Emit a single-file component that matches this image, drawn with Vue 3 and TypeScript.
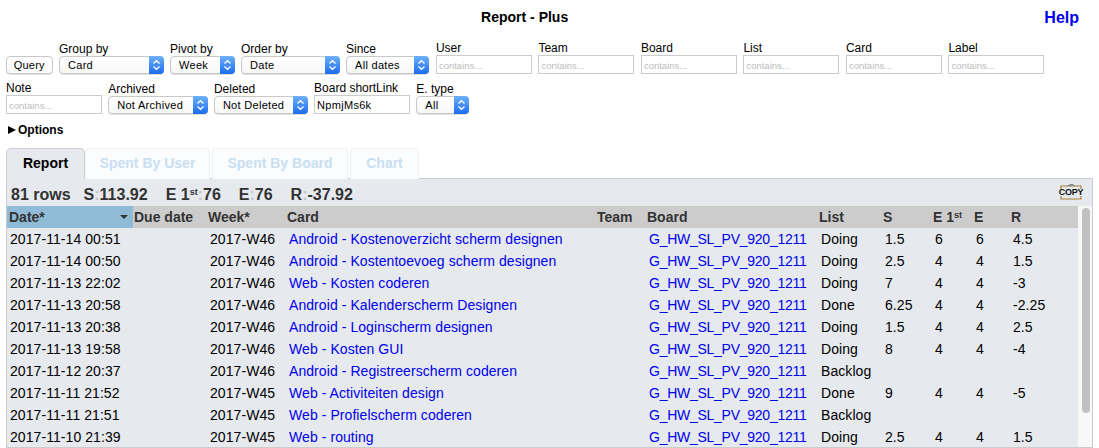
<script setup lang="ts">
interface Control {
  label: string
  kind: 'select' | 'input'
  width: number
  value?: string
}

const rowOne: Control[] = [
  { label: 'Group by', kind: 'select', width: 104.5, value: 'Card' },
  { label: 'Pivot by', kind: 'select', width: 64.5, value: 'Week' },
  { label: 'Order by', kind: 'select', width: 98.5, value: 'Date' },
  { label: 'Since', kind: 'select', width: 83.4, value: 'All dates' },
  { label: 'User', kind: 'input', width: 96 },
  { label: 'Team', kind: 'input', width: 96 },
  { label: 'Board', kind: 'input', width: 96 },
  { label: 'List', kind: 'input', width: 96 },
  { label: 'Card', kind: 'input', width: 96 },
  { label: 'Label', kind: 'input', width: 96 }
]

const rowTwo: Control[] = [
  { label: 'Note', kind: 'input', width: 96 },
  { label: 'Archived', kind: 'select', width: 99.5, value: 'Not Archived' },
  { label: 'Deleted', kind: 'select', width: 94, value: 'Not Deleted' },
  { label: 'Board shortLink', kind: 'input', width: 96, value: 'NpmjMs6k' },
  { label: 'E. type', kind: 'select', width: 53, value: 'All' }
]

const tabs = ['Report', 'Spent By User', 'Spent By Board', 'Chart']

const columns = [
  { name: 'Date*', width: 126 },
  { name: 'Due date', width: 73 },
  { name: 'Week*', width: 79 },
  { name: 'Card', width: 310 },
  { name: 'Team', width: 50 },
  { name: 'Board', width: 172 },
  { name: 'List', width: 64 },
  { name: 'S', width: 50 },
  { name: 'E 1', width: 41 },
  { name: 'E', width: 37 },
  { name: 'R', width: 69 }
]

const board = 'G_HW_SL_PV_920_1211'
const rows = [
  ['2017-11-14 00:51', '2017-W46', 'Android - Kostenoverzicht scherm designen', 'Doing', '1.5', '6', '6', '4.5'],
  ['2017-11-14 00:50', '2017-W46', 'Android - Kostentoevoeg scherm designen', 'Doing', '2.5', '4', '4', '1.5'],
  ['2017-11-13 22:02', '2017-W46', 'Web - Kosten coderen', 'Doing', '7', '4', '4', '-3'],
  ['2017-11-13 20:58', '2017-W46', 'Android - Kalenderscherm Designen', 'Done', '6.25', '4', '4', '-2.25'],
  ['2017-11-13 20:38', '2017-W46', 'Android - Loginscherm designen', 'Doing', '1.5', '4', '4', '2.5'],
  ['2017-11-13 19:58', '2017-W46', 'Web - Kosten GUI', 'Doing', '8', '4', '4', '-4'],
  ['2017-11-12 20:37', '2017-W46', 'Android - Registreerscherm coderen', 'Backlog', '', '', '', ''],
  ['2017-11-11 21:52', '2017-W45', 'Web - Activiteiten design', 'Done', '9', '4', '4', '-5'],
  ['2017-11-11 21:51', '2017-W45', 'Web - Profielscherm coderen', 'Backlog', '', '', '', ''],
  ['2017-11-10 21:39', '2017-W45', 'Web - routing', 'Doing', '2.5', '4', '4', '1.5']
]
</script>

<template>
  <div class="page">
    <header class="top">
      <div class="title">Report - Plus</div>
      <a class="help" href="#">Help</a>
    </header>

    <div class="filters">
      <button type="button" class="query">Query</button>
      <div v-for="c in rowOne" :key="c.label" class="field" :style="{ width: c.width + 'px' }">
        <label>{{ c.label }}</label>
        <input v-if="c.kind === 'input'" :value="c.value" placeholder="contains..." />
        <div v-else class="select">
          <span>{{ c.value }}</span>
          <i class="arrows">
            <svg width="9" height="12" viewBox="0 0 9 12" fill="none" stroke="#fff" stroke-width="1.3">
              <path d="M1.5 4.5 4.5 1.7l3 2.8M1.5 7.5l3 2.8 3-2.8" />
            </svg>
          </i>
        </div>
      </div>
    </div>

    <div class="filters second">
      <div v-for="c in rowTwo" :key="c.label" class="field" :style="{ width: c.width + 'px' }">
        <label>{{ c.label }}</label>
        <input v-if="c.kind === 'input'" :value="c.value" placeholder="contains..." />
        <div v-else class="select">
          <span>{{ c.value }}</span>
          <i class="arrows">
            <svg width="9" height="12" viewBox="0 0 9 12" fill="none" stroke="#fff" stroke-width="1.3">
              <path d="M1.5 4.5 4.5 1.7l3 2.8M1.5 7.5l3 2.8 3-2.8" />
            </svg>
          </i>
        </div>
      </div>
    </div>

    <div class="options"><b class="tri"></b>Options</div>

    <nav class="tabs">
      <div v-for="(t, i) in tabs" :key="t" class="tab" :class="{ active: i === 0 }">{{ t }}</div>
    </nav>

    <section class="panel">
      <div class="summary">
        <span class="count">81 rows</span>
        <span>S<em>:</em>113.92</span>
        <span>E 1<sup>st</sup><em>:</em>76</span>
        <span>E<em>:</em>76</span>
        <span>R<em>:</em>-37.92</span>
        <div class="copy">
          <svg width="24" height="18" viewBox="0 0 24 18" fill="none">
            <path d="M2 6V3h20v3M2 13v3h20v-3" stroke="#a9803f" stroke-width="1.2" />
            <path d="M8 3V2h2l1-1h3l1 1h1v1z" fill="#8a8a8a" />
          </svg>
          <span>COPY</span>
        </div>
      </div>

      <div class="grid">
        <table>
          <colgroup>
            <col v-for="c in columns" :key="c.name" :style="{ width: c.width + 'px' }" />
          </colgroup>
          <thead>
            <tr>
              <th v-for="(c, i) in columns" :key="c.name" :class="{ sorted: i === 0 }">
                {{ c.name }}<sup v-if="c.name === 'E 1'">st</sup>
                <b v-if="i === 0" class="caret"></b>
              </th>
            </tr>
          </thead>
          <tbody>
            <tr v-for="r in rows" :key="r[0]">
              <td>{{ r[0] }}</td>
              <td></td>
              <td>{{ r[1] }}</td>
              <td><a href="#">{{ r[2] }}</a></td>
              <td></td>
              <td><a href="#" class="board">{{ board }}</a></td>
              <td>{{ r[3] }}</td>
              <td>{{ r[4] }}</td>
              <td>{{ r[5] }}</td>
              <td>{{ r[6] }}</td>
              <td>{{ r[7] }}</td>
            </tr>
          </tbody>
        </table>
        <div class="track"><div class="thumb"></div></div>
      </div>
    </section>
  </div>
</template>

<style>
html,
body {
  overflow: hidden;
  background: #fff;
}
</style>

<style scoped>
.page {
  height: 448px;
  overflow: hidden;
  display: flex;
  flex-direction: column;
  font-family: 'Liberation Sans', Arial, sans-serif;
  color: #000;
}

.top {
  height: 41px;
  display: flex;
  align-items: flex-start;
  padding: 0 20px 0 5px;
  flex: none;
  box-sizing: border-box;
}

.title {
  flex: 1;
  text-align: center;
  font-size: 14px;
  font-weight: bold;
  line-height: 16px;
  margin-top: 9px;
}

.help {
  font-size: 16px;
  font-weight: bold;
  line-height: 18px;
  margin-top: 9px;
  color: #0000ee;
  text-decoration: none;
}

.filters {
  display: flex;
  align-items: flex-end;
  gap: 6.5px;
  padding-left: 6px;
  height: 33px;
  flex: none;
}

.second {
  gap: 6.2px;
  margin-top: 7px;
}

.query {
  width: 46.5px;
  height: 18px;
  padding: 0;
  box-sizing: border-box;
  background: #fff;
  border: 1px solid #c8c8c8;
  border-radius: 4px;
  box-shadow: 0 1px 0 #e4e4e4;
  font: 11px 'Liberation Sans', Arial, sans-serif;
  letter-spacing: 0.2px;
  color: #000;
}

.field {
  display: flex;
  flex-direction: column;
  flex: none;
}

.field label {
  font-size: 12px;
  line-height: 14px;
  white-space: nowrap;
}

.field input {
  box-sizing: border-box;
  width: 100%;
  height: 19px;
  padding: 0 2px;
  border: 1px solid #cccccc;
  outline: none;
  font: 11px 'Liberation Sans', Arial, sans-serif;
  letter-spacing: 0.3px;
  color: #000;
}

.field input::placeholder {
  font-size: 9.5px;
  letter-spacing: 0;
  color: #bcbcbc;
}

.select {
  position: relative;
  box-sizing: border-box;
  height: 18px;
  padding-left: 8px;
  border: 1px solid #c8c8c8;
  border-radius: 4px;
  background: linear-gradient(#fff, #f7f7f7);
  box-shadow: 0 1px 0 #e0e0e0;
  font-size: 11px;
  line-height: 16px;
  letter-spacing: 0.3px;
  white-space: nowrap;
}

.arrows {
  position: absolute;
  top: -1px;
  right: -1px;
  bottom: -1px;
  width: 15px;
  display: flex;
  align-items: center;
  justify-content: center;
  border-radius: 0 4px 4px 0;
  background: linear-gradient(#6db1f8, #1c6cf0);
}

.options {
  display: flex;
  align-items: center;
  height: 14px;
  margin-top: 9px;
  padding-left: 8px;
  font-size: 12px;
  font-weight: bold;
  flex: none;
}

.tri {
  width: 0;
  height: 0;
  margin-right: 2px;
  border-left: 8px solid #000;
  border-top: 4.5px solid transparent;
  border-bottom: 4.5px solid transparent;
}

.tabs {
  display: flex;
  gap: 2px;
  height: 31px;
  margin-top: 11px;
  padding-left: 6px;
  flex: none;
  position: relative;
  z-index: 1;
}

.tab {
  box-sizing: border-box;
  height: 31px;
  line-height: 29px;
  text-align: center;
  font-size: 14px;
  font-weight: bold;
  white-space: nowrap;
  color: #c9dff1;
  background: #fafcfe;
  border: 1px solid #eef2f6;
  border-bottom: none;
  border-radius: 5px 5px 0 0;
}

.tab:nth-child(1) {
  width: 79px;
  margin-right: -2px;
}

.tab:nth-child(2) {
  width: 125px;
}

.tab:nth-child(3) {
  width: 136px;
}

.tab:nth-child(4) {
  width: 69px;
}

.tab.active {
  color: #000;
  background: #e6e9ed;
  border-color: #cfcfcf;
}

.panel {
  flex: 1;
  min-height: 0;
  margin: -1px 6px 0;
  border: 1px solid #cccccc;
  background: #e6e9ed;
  display: flex;
  flex-direction: column;
  overflow: hidden;
}

.summary {
  position: relative;
  height: 27px;
  flex: none;
  display: flex;
  align-items: flex-end;
  gap: 18px;
  padding-left: 4px;
  font-size: 16px;
  font-weight: bold;
  line-height: 22px;
  color: #333;
}

.count {
  margin-right: -5px;
}

.summary em {
  font-style: normal;
  color: #c4c8cc;
}

.summary sup {
  font-size: 9px;
  line-height: 0;
  vertical-align: 5px;
}

.copy {
  position: absolute;
  right: 9px;
  top: 4px;
  width: 24px;
  height: 18px;
  display: flex;
  align-items: center;
  justify-content: center;
}

.copy svg {
  position: absolute;
  inset: 0;
}

.copy span {
  position: relative;
  font-size: 9px;
  letter-spacing: -0.3px;
  line-height: 10px;
  color: #111;
}

.grid {
  flex: 1;
  min-height: 0;
  display: flex;
  align-items: flex-start;
}

table {
  table-layout: fixed;
  width: 1071px;
  flex: none;
  border-collapse: collapse;
  font-size: 14px;
}

th {
  position: relative;
  height: 22px;
  padding: 0 0 0 2px;
  background: #cccccc;
  color: #333;
  text-align: left;
  font-weight: bold;
  white-space: nowrap;
}

th:nth-child(2) {
  padding-left: 1px;
}

th sup {
  font-size: 9px;
  line-height: 0;
  vertical-align: 4px;
}

th.sorted {
  background: #8fbbd6;
}

.caret {
  position: absolute;
  right: 5px;
  top: 9px;
  width: 0;
  height: 0;
  border-top: 4px solid #333;
  border-left: 4px solid transparent;
  border-right: 4px solid transparent;
}

td {
  height: 22px;
  padding: 0 0 0 4px;
  white-space: nowrap;
  color: #000;
  letter-spacing: 0.07px;
}

td:first-child {
  padding-left: 3px;
}

td a {
  color: #0000ee;
  text-decoration: none;
}

td a.board {
  letter-spacing: -0.26px;
}

.track {
  flex: none;
  width: 15px;
  height: 100%;
  background: #f8f8f8;
  padding: 2px 0 0 4px;
  box-sizing: border-box;
}

.thumb {
  width: 8px;
  height: 205px;
  border-radius: 4px;
  background: #c1c1c1;
}
</style>
